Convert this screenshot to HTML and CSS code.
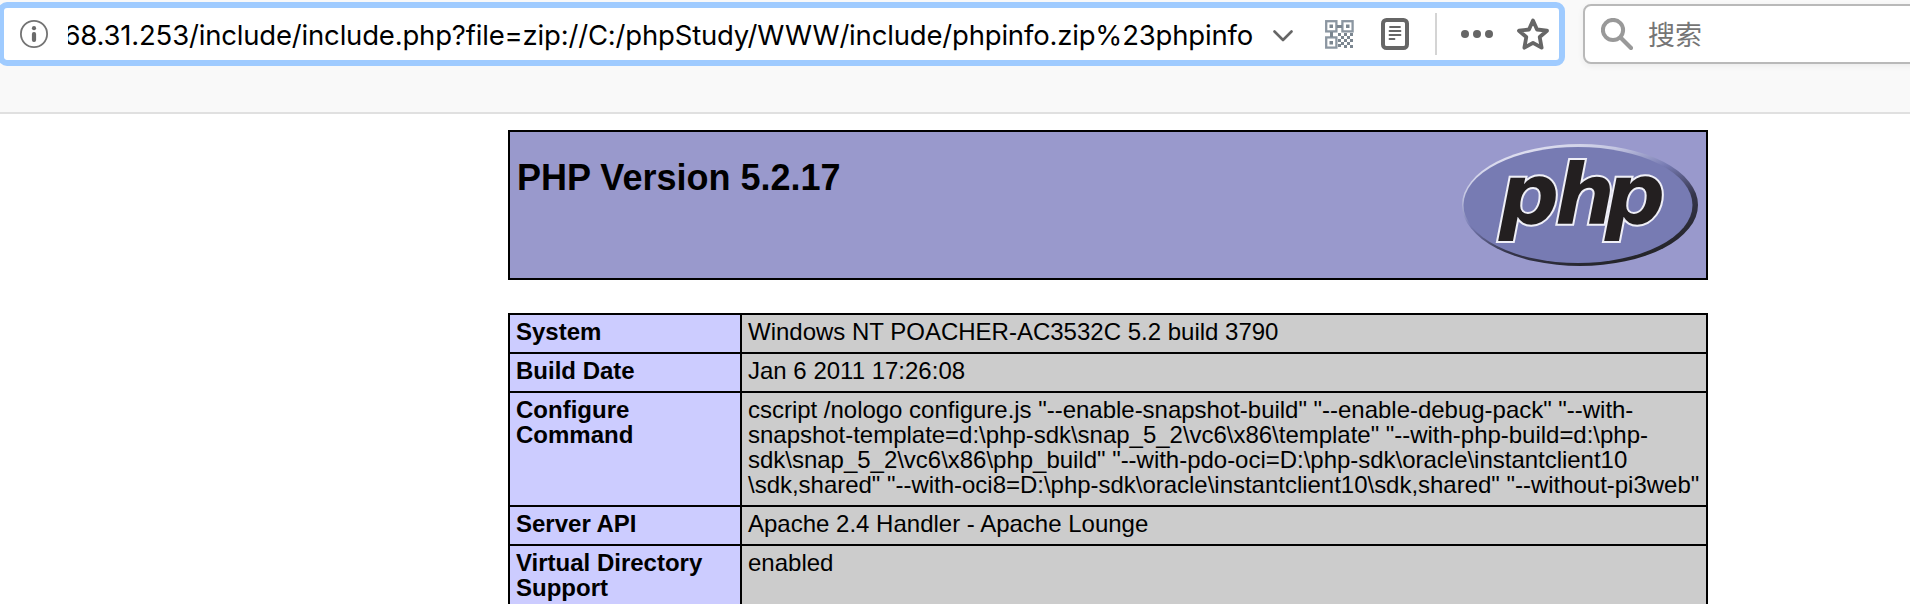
FILE: index.html
```html
<!DOCTYPE html>
<html lang="zh-CN">
<head>
<meta charset="utf-8">
<title>phpinfo()</title>
<link rel="stylesheet" href="styles.css">
</head>
<body>
<header class="toolbar">
  <div class="urlbar">
    <svg class="info" width="28" height="28" viewBox="0 0 28 28"><circle cx="14" cy="14" r="13.1" fill="none" stroke="#737373" stroke-width="1.8"/><circle cx="14" cy="8.2" r="2.1" fill="#6a6a6a"/><rect x="11.9" y="12" width="4.2" height="10" rx="2" fill="#6a6a6a"/></svg>
    <div class="url"><span>68.31.253/include/include.php?file=zip://C:/phpStudy/WWW/include/phpinfo.zip%23phpinfo</span></div>
    <svg class="chevron" width="20" height="12" viewBox="0 0 20 12"><path d="M1.5 1.5 10 10 18.5 1.5" fill="none" stroke="#666" stroke-width="2.6" stroke-linecap="round" stroke-linejoin="round"/></svg>
    <svg class="qr" width="29" height="29" viewBox="0 0 29 29">
      <g fill="none" stroke="#8b96a1" stroke-width="2.3"><rect x="1.2" y="1.2" width="10.2" height="10.2"/><rect x="17.4" y="1.2" width="10.2" height="10.2"/><rect x="1.2" y="17.4" width="10.2" height="10.2"/></g>
      <path fill="#7b8690" d="M4.5 4.5h3.5v3.5h-3.5zM21 4.5h3.5v3.5h-3.5zM4.5 21h3.5v3.5h-3.5zM12 5h5v3h-5zM5 12h3v5h-3zM13 13h3v3h-3zM19 13h3v3h-3zM25 13h3v3h-3zM16 16h3v3h-3zM22 16h3v3h-3zM13 19h3v3h-3zM19 19h3v3h-3zM25 19h3v3h-3zM16 22h3v3h-3zM22 22h3v3h-3zM13 24h3v3h-3zM19 25h3v3h-3zM25 25h3v3h-3z"/>
    </svg>
    <svg class="reader" width="28" height="32" viewBox="0 0 28 32"><rect x="2" y="2" width="24" height="28" rx="3.5" fill="none" stroke="#666" stroke-width="4"/><path d="M9 9h10M8.500 13h11M8.500 17h11M8.500 21h5" stroke="#666" stroke-width="1.8" stroke-linecap="round"/></svg>
    <i class="separator"></i>
    <svg class="dots" width="32" height="8" viewBox="0 0 32 8" fill="#666"><circle cx="4" cy="4" r="4"/><circle cx="16" cy="4" r="4"/><circle cx="28" cy="4" r="4"/></svg>
    <svg class="star" width="32" height="32" viewBox="0 0 32 32"><path d="M16 2.500 20 11.500 30 12.700 22.700 19 24.600 29.700 16 24.800 7.400 29.700 9.300 19 2 12.700 12 11.500Z" fill="none" stroke="#666" stroke-width="3.800" stroke-linejoin="round"/></svg>
  </div>
  <div class="search">
    <svg width="32" height="32" viewBox="0 0 32 32" fill="none" stroke="#999"><circle cx="12" cy="12" r="10.1" stroke-width="4"/><path d="m19.500 19.500 10.500 10.500" stroke-width="4.2" stroke-linecap="round"/></svg>
    <span>搜索</span>
  </div>
</header>
<main class="page">
  <section class="banner">
    <h1>PHP Version 5.2.17</h1>
    <svg class="logo" width="240" height="134" viewBox="0 0 240 134">
      <defs><linearGradient id="rim" x1="0.2" y1="0" x2="0.8" y2="1"><stop offset="0" stop-color="#e8e8f5"/><stop offset=".22" stop-color="#c5c7e2"/><stop offset=".42" stop-color="#777bb3"/><stop offset=".65" stop-color="#35354b"/><stop offset="1" stop-color="#202020"/></linearGradient></defs>
      <ellipse cx="120" cy="67" rx="118" ry="61" fill="url(#rim)"/>
      <ellipse cx="118" cy="67" rx="114.500" ry="58" fill="#777bb3"/>
      <text class="logo-text" x="39 95 145" y="86">php</text>
    </svg>
  </section>
  <table class="details">
    <tr><th>System</th><td>Windows NT POACHER-AC3532C 5.2 build 3790</td></tr>
    <tr><th>Build Date</th><td>Jan 6 2011 17:26:08</td></tr>
    <tr><th>Configure<br>Command</th><td class="command">cscript /nologo configure.js "--enable-snapshot-build" "--enable-debug-pack" "--with-<br>snapshot-template=d:\php-sdk\snap_5_2\vc6\x86\template" "--with-php-build=d:\php-<br>sdk\snap_5_2\vc6\x86\php_build" "--with-pdo-oci=D:\php-sdk\oracle\instantclient10<br>\sdk,shared" "--with-oci8=D:\php-sdk\oracle\instantclient10\sdk,shared" "--without-pi3web"</td></tr>
    <tr><th>Server API</th><td>Apache 2.4 Handler - Apache Lounge</td></tr>
    <tr><th>Virtual Directory<br>Support</th><td>enabled</td></tr>
  </table>
</main>
</body>
</html>
```
FILE: styles.css
```css
* { box-sizing: border-box; }
body { margin: 0; height: 604px; overflow: hidden; background: #fff; color: #000; font-family: "Liberation Sans", Arial, sans-serif; }
svg { display: block; flex: none; }
.toolbar { display: flex; align-items: flex-start; height: 114px; padding-top: 2px; background: #f9f9f9; border-bottom: 2px solid #e0e0e0; overflow: hidden; }
.urlbar { flex: none; display: flex; align-items: center; width: 1567px; height: 64px; margin-left: -2px; padding-left: 16px; background: #fff; border: 6px solid #9fcbff; border-radius: 9px; }
.url { display: flex; justify-content: flex-end; width: 1185px; margin-left: 20px; padding-top: 1px; overflow: hidden; white-space: nowrap; font: 27.5px/40px Inter, sans-serif; letter-spacing: -0.18px; }
.chevron { margin: 3px 0 0 20px; }
.qr { margin-left: 32px; }
.reader { margin-left: 27px; }
.separator { width: 2px; height: 42px; margin-left: 26px; background: #d4d4d4; }
.dots { margin-left: 24px; }
.star { margin-left: 24px; }
.search { flex: none; display: flex; align-items: center; width: 360px; height: 60px; margin: 2px 0 0 18px; padding-left: 16px; gap: 15px; background: #fff; border: 2px solid #b9b9b9; border-radius: 8px; box-shadow: 0 2px 6px rgba(0,0,0,.06); color: #757575; font: 27px/40px "Noto Sans CJK SC", sans-serif; }
.page { width: 1200px; margin: 16px 0 0 508px; }
.banner { display: flex; justify-content: space-between; align-items: flex-start; height: 150px; padding: 6px; background: #9999cc; border: 2px solid #000; }
.banner h1 { margin: 20px 0 0 1px; font-size: 36px; line-height: 40px; }
.logo-text { font: italic bold 84px "DejaVu Sans", sans-serif; fill: #231f20; stroke: #efeff7; stroke-width: 4px; paint-order: stroke; stroke-linejoin: miter; }
.details { width: 1200px; margin-top: 33px; border-collapse: collapse; table-layout: fixed; font-size: 24px; line-height: 25px; }
.details th, .details td { padding: 4px 6px 8px; border: 2px solid #000; text-align: left; vertical-align: top; white-space: nowrap; }
.details th { width: 232px; background: #ccccff; }
.details td { background: #cccccc; }
.details .command { letter-spacing: -0.02px; }
```
